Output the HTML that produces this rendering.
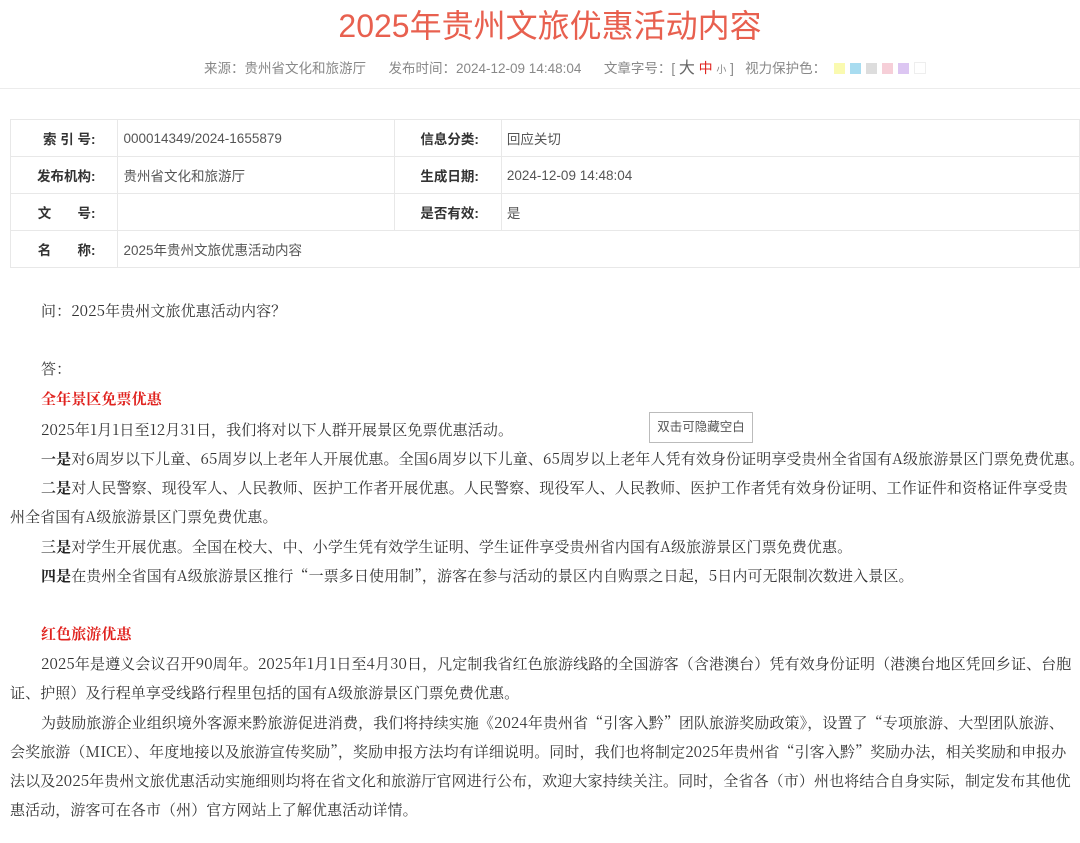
<!DOCTYPE html>
<html><head><meta charset="utf-8"><style>
html,body{margin:0;padding:0;width:1080px;height:843px;overflow:hidden;background:#fff}
.t{position:absolute;left:0;width:1100px;text-align:center;top:4px;font:32px "Liberation Sans","Noto Sans CJK SC",sans-serif;color:#e8604f;line-height:44px}
.meta{position:absolute;top:58px;left:204px;font:13.5px "Liberation Sans","Noto Sans CJK SC",sans-serif;color:#888;white-space:nowrap;line-height:20px}
.sw{display:inline-block;width:11px;height:11px;margin-right:5px;vertical-align:-1px}
.hr{position:absolute;top:88px;left:0;width:1080px;height:1px;background:#ececec}
table{position:absolute;left:10px;top:119px;border-collapse:collapse;font:13.5px "Liberation Sans","Noto Sans CJK SC",sans-serif;color:#555}
td{border:1px solid #e8e8e8;height:36px;padding:0 5px}
td.l{text-align:right;font-weight:bold;color:#333;padding-right:22px}
.ln{position:absolute;white-space:nowrap;font:15px "Noto Serif CJK SC",serif;color:#333;line-height:20px;letter-spacing:0.1px}
.r{color:#e0221e;font-weight:bold}
b{color:#222}
.btn{position:absolute;left:649px;top:412px;width:102px;height:29px;border:1px solid #bbb;font:12.5px "Liberation Sans","Noto Sans CJK SC",sans-serif;color:#555;text-align:center;line-height:29px;background:#fff}
</style></head><body>
<div class="t">2025年贵州文旅优惠活动内容</div>
<div class="meta">来源：贵州省文化和旅游厅&nbsp;&nbsp;&nbsp;&nbsp;&nbsp;&nbsp;发布时间：2024-12-09 14:48:04&nbsp;&nbsp;&nbsp;&nbsp;&nbsp;&nbsp;文章字号：[ <span style="font-size:16px;color:#666">大</span> <span style="color:#e0221e;font-size:14px">中</span> <span style="font-size:10px">小</span> ]&nbsp;&nbsp;&nbsp;视力保护色：&nbsp;&nbsp;<span class="sw" style="background:#fafab0"></span><span class="sw" style="background:#a8dcf0"></span><span class="sw" style="background:#ddd"></span><span class="sw" style="background:#f6cfd8"></span><span class="sw" style="background:#dcc6f2"></span><span class="sw" style="background:#fff;border:1px solid #eee;width:10px;height:10px"></span></div>
<div class="hr"></div>
<table>
<tr><td class="l" style="width:80px">索 引 号:</td><td style="width:270px">000014349/2024-1655879</td><td class="l" style="width:80px">信息分类:</td><td style="width:580px">回应关切</td></tr>
<tr><td class="l">发布机构:</td><td>贵州省文化和旅游厅</td><td class="l">生成日期:</td><td>2024-12-09 14:48:04</td></tr>
<tr><td class="l">文&nbsp;&nbsp;&nbsp;&nbsp;&nbsp;&nbsp;&nbsp;号:</td><td></td><td class="l">是否有效:</td><td>是</td></tr>
<tr><td class="l">名&nbsp;&nbsp;&nbsp;&nbsp;&nbsp;&nbsp;&nbsp;称:</td><td colspan="3">2025年贵州文旅优惠活动内容</td></tr>
</table>
<div class="ln" style="left:41px;top:301px">问：2025年贵州文旅优惠活动内容？</div>
<div class="ln" style="left:41px;top:359px">答：</div>
<div class="ln r" style="left:41px;top:389px">全年景区免票优惠</div>
<div class="ln" style="left:41px;top:420px">2025年1月1日至12月31日，我们将对以下人群开展景区免票优惠活动。</div>
<div class="btn">双击可隐藏空白</div>
<div class="ln" style="left:41px;top:449px"><b>一是</b>对6周岁以下儿童、65周岁以上老年人开展优惠。全国6周岁以下儿童、65周岁以上老年人凭有效身份证明享受贵州全省国有A级旅游景区门票免费优惠。</div>
<div class="ln" style="left:41px;top:478px"><b>二是</b>对人民警察、现役军人、人民教师、医护工作者开展优惠。人民警察、现役军人、人民教师、医护工作者凭有效身份证明、工作证件和资格证件享受贵</div>
<div class="ln" style="left:10px;top:507px">州全省国有A级旅游景区门票免费优惠。</div>
<div class="ln" style="left:41px;top:537px"><b>三是</b>对学生开展优惠。全国在校大、中、小学生凭有效学生证明、学生证件享受贵州省内国有A级旅游景区门票免费优惠。</div>
<div class="ln" style="left:41px;top:566px"><b>四是</b>在贵州全省国有A级旅游景区推行“一票多日使用制”，游客在参与活动的景区内自购票之日起，5日内可无限制次数进入景区。</div>
<div class="ln r" style="left:41px;top:624px">红色旅游优惠</div>
<div class="ln" style="left:41px;top:654px">2025年是遵义会议召开90周年。2025年1月1日至4月30日，凡定制我省红色旅游线路的全国游客（含港澳台）凭有效身份证明（港澳台地区凭回乡证、台胞</div>
<div class="ln" style="left:10px;top:683px">证、护照）及行程单享受线路行程里包括的国有A级旅游景区门票免费优惠。</div>
<div class="ln" style="left:41px;top:713px">为鼓励旅游企业组织境外客源来黔旅游促进消费，我们将持续实施《2024年贵州省“引客入黔”团队旅游奖励政策》，设置了“专项旅游、大型团队旅游、</div>
<div class="ln" style="left:10px;top:742px">会奖旅游（MICE）、年度地接以及旅游宣传奖励”，奖励申报方法均有详细说明。同时，我们也将制定2025年贵州省“引客入黔”奖励办法，相关奖励和申报办</div>
<div class="ln" style="left:10px;top:771px">法以及2025年贵州文旅优惠活动实施细则均将在省文化和旅游厅官网进行公布，欢迎大家持续关注。同时，全省各（市）州也将结合自身实际，制定发布其他优</div>
<div class="ln" style="left:10px;top:800px">惠活动，游客可在各市（州）官方网站上了解优惠活动详情。</div>
</body></html>
